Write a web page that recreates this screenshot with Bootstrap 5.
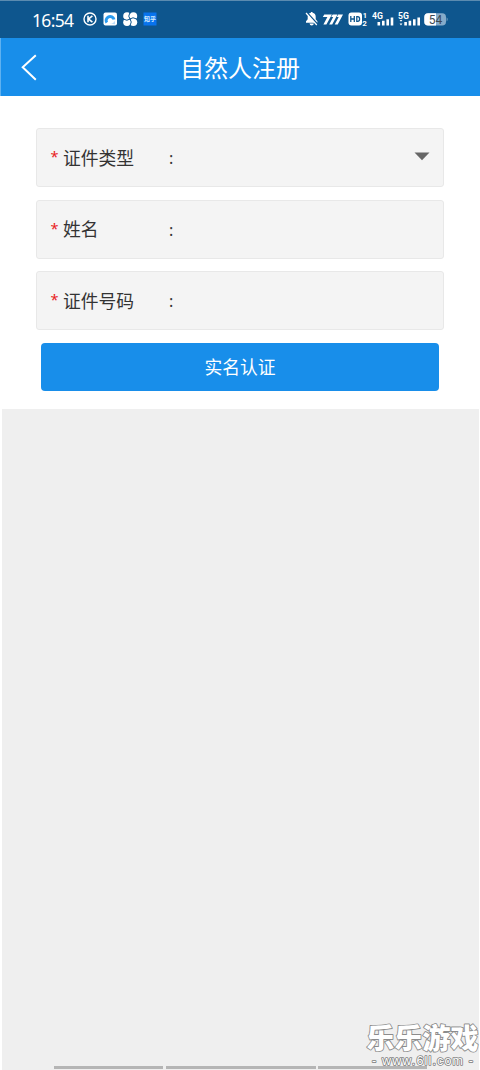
<!DOCTYPE html>
<html lang="zh-CN">
<head>
<meta charset="utf-8">
<meta name="viewport" content="width=device-width, initial-scale=1">
<title>自然人注册</title>
<link href="https://cdn.jsdelivr.net/npm/bootstrap@5.3.0/dist/css/bootstrap.min.css" rel="stylesheet">
<style>
body{font-family:"Noto Sans","Noto Sans CJK SC",sans-serif;background:#fff;color:#333;height:1070px;overflow:hidden}
.screen{width:480px;height:1070px}
.status{height:38px;background:#0e568e;border-top:1px solid #5b8bb0;padding:0 31px 1px 32px}
.clock{font:400 17.5px/36px "Noto Sans",sans-serif;width:50px;letter-spacing:-.65px;padding-top:1px}
.titlebar{height:58px;background:#188eea;border-left:1px solid #5fb1f0}
.titlebar h1{font:400 24px/58px "Noto Sans CJK SC",sans-serif;margin-left:-1px!important}
.back{left:19px;top:15px}
.form-area{height:313px;padding:32px 36px 0}
.field{height:59px;margin-bottom:12.5px;background:#f4f4f4;border:1px solid #e8e8e8;border-radius:3px;font:400 17.8px/56px "Noto Sans CJK SC",sans-serif;padding-left:14px;padding-right:13px}
.star{color:#e8201c;width:12.5px;font-family:"Noto Sans",sans-serif;font-size:14.5px;line-height:54px;padding-bottom:3px;margin-left:-.5px}
.field-name{width:106px;padding-bottom:1.5px}
.colon{font-family:"Noto Sans",sans-serif;font-size:16px;padding-top:1px}
.submit{height:48px;margin:0 5px;background:#188eea;border:0;border-radius:4px;color:#fff;font:400 17.8px/47px "Noto Sans CJK SC",sans-serif;padding:0 0 1px}
.submit:hover{background:#137fd4;color:#fff}
.blank{background:#efefef;margin:0 1px 0 2px}
.strip{left:54px;right:50px;bottom:1px;height:3px;gap:2.5px}
.strip span{background:#b5b5b5}
.watermark{left:364px;top:1017px;width:116px;height:53px}
</style>
</head>
<body>
<div class="screen position-relative d-flex flex-column">
  <div class="status d-flex align-items-center text-white flex-shrink-0">
    <span class="clock">16:54</span>
    <svg width="78" height="18" viewBox="82 10 78 18" class="flex-shrink-0">
      <circle cx="90" cy="19" r="6" fill="none" stroke="#fff" stroke-width="1.4"/>
      <path d="M88 15.8v6.4M92.4 15.8L88.6 19l3.8 3.2" fill="none" stroke="#fff" stroke-width="1.6"/>
      <rect x="103.5" y="12.5" width="13.5" height="13" rx="2" fill="#fff"/>
      <path d="M106.8 22.7a4 4 0 1 1 7.2-3.2" fill="none" stroke="#299bf0" stroke-width="3"/>
      <path d="M109 23.8q4 .7 6-3v3.5z" fill="#badcfa"/>
      <g fill="#fff"><circle cx="127" cy="16" r="3.8"/><circle cx="133.4" cy="16" r="3.8"/><circle cx="127" cy="22.2" r="3.8"/><circle cx="133.4" cy="22.2" r="3.8"/></g>
      <path d="M130 12.5q-2.5 4 0 6.5M136.7 19q-4-2.5-6.7 0M130 25.7q2.5-4 0-6.7M123.2 19q4 2.5 6.8 0" fill="none" stroke="#0e568e" stroke-width="1"/>
      <rect x="143.5" y="12.5" width="13" height="13" fill="#0873ed"/>
      <text x="150" y="21.4" font-size="6" font-weight="700" text-anchor="middle" fill="#d5ecff" font-family="Noto Sans CJK SC">知乎</text>
    </svg>
    <svg width="146" height="20" viewBox="303 9 146 20" class="ms-auto flex-shrink-0">
      <path d="M306 22.8v-1.5l1.7-2V16.7q0-3.3 3.2-3.9V12h1.6v.8q3.2.6 3.2 3.9v2.6l1.7 2v1.5zM309.5 23.6h4.4q-.4 2-2.2 2t-2.2-2z" fill="#fff"/>
      <path d="M306.7 12.2l11 12.2" stroke="#0e568e" stroke-width="1.6"/><path d="M306 13l10.8 12" stroke="#fff" stroke-width="1.2"/>
      <g fill="#fff"><path d="M324.3 14.4h7.6L326.4 24.5h-3l4-7.4h-4.6z"/><path d="M332.7 14.4h4.8L332.2 24.5h-3l4-7.4h-2z"/><path d="M338.2 14.4h4.8L337.7 24.5h-3l4-7.4h-2z"/></g>
      <rect x="348.5" y="12.5" width="13.5" height="13" rx="3" fill="#fff"/>
      <path d="M350.8 16v6M354.3 16v6M350.8 19h3.5M356.8 16.7v4.6h1q1.8 0 1.8-2.3t-1.8-2.3z" fill="none" stroke="#0e568e" stroke-width="1.3"/>
      <g fill="#fff" font-family="Roboto" font-weight="700"><text x="362.7" y="18.2" font-size="7.5">1</text><text x="362.3" y="25.7" font-size="8">2</text><text x="372" y="18.6" font-size="8.7">4G</text><text x="398" y="18.6" font-size="8.7">5G</text></g>
      <g fill="#fff"><path d="M377.5 22h2.6v3.5h-2.6zM382 20.7h2.6v4.8H382zM386.4 19.3h2.6v6.2h-2.6zM390.7 17.5h2.6v8h-2.6zM399.6 20h2.8l-1.4 1.8zM399.6 23.5h2.8l-1.4 2zM404.3 22h2.6v3.5h-2.6zM408.6 20.7h2.6v4.8h-2.6zM413 19.3h2.6v6.2H413zM417.4 17.5h2.6v8h-2.6z"/></g>
      <rect x="424.3" y="13.3" width="21.7" height="12.2" rx="3.8" fill="#86abca"/><path d="M436 13.3h-7.9q-3.8 0-3.8 3.8v4.6q0 3.8 3.8 3.8h7.9z" fill="#fff"/><path d="M446.7 17.3q1.8 2 0 4.3z" fill="#86abca"/>
      <text x="435.4" y="23.5" font-size="12" text-anchor="middle" fill="#3d4954" font-family="Roboto">54</text>
    </svg>
  </div>
  <header class="titlebar position-relative text-center text-white flex-shrink-0">
    <svg class="back position-absolute" width="20" height="30" viewBox="0 0 20 30"><path d="M15.8 2.3L2.7 14.3l13.1 12.4" fill="none" stroke="#fff" stroke-width="2"/></svg>
    <h1 class="m-0">自然人注册</h1>
  </header>
  <main class="form-area d-flex flex-column flex-shrink-0">
    <div class="field d-flex align-items-center"><span class="star">*</span><span class="field-name">证件类型</span><span class="colon">:</span>
      <svg class="ms-auto" width="16" height="9" viewBox="0 0 16 9" style="margin-top:-2px"><path d="M.5.5h15L8 8.3z" fill="#666"/></svg></div>
    <div class="field d-flex align-items-center"><span class="star">*</span><span class="field-name">姓名</span><span class="colon">:</span></div>
    <div class="field d-flex align-items-center"><span class="star">*</span><span class="field-name">证件号码</span><span class="colon">:</span></div>
    <button class="btn submit" type="button">实名认证</button>
  </main>
  <div class="blank flex-grow-1"></div>
  <div class="strip position-absolute d-flex"><span style="width:109px"></span><span style="width:150px"></span><span style="width:109px"></span></div>
  <svg class="watermark position-absolute" viewBox="364 1017 116 53">
    <g fill="#fff" stroke-linejoin="round" paint-order="stroke">
      <text x="366.5" y="1048.5" font-family="Noto Sans CJK SC" font-size="28" font-weight="900" stroke="#8c8c8c" stroke-width="1.8" textLength="112">乐乐游戏</text>
      <text x="372" y="1065" font-family="Liberation Sans" font-size="12.5" stroke="#808080" stroke-width="1.6" textLength="101" lengthAdjust="spacing">- www.6ll.com -</text>
    </g>
  </svg>
</div>
<script src="https://cdn.jsdelivr.net/npm/bootstrap@5.3.0/dist/js/bootstrap.bundle.min.js"></script>
</body>
</html>
